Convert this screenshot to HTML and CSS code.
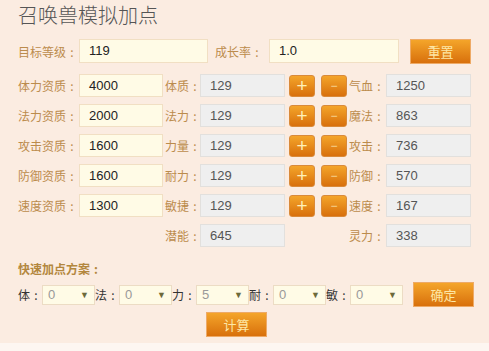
FILE: index.html
```html
<!DOCTYPE html>
<html lang="zh-CN">
  <head>
    <meta charset="UTF-8" />
    <meta name="viewport" content="width=device-width, initial-scale=1.0" />
    <title>召唤兽模拟加点</title>
    <link rel="stylesheet" href="styles.css">
  </head>
  <body>
    <div class="panel">
      <h1>召唤兽模拟加点</h1>

      <div class="row top-row">
        <span class="label lead">目标等级<span class="colon">:</span></span>
        <div class="box cream wide">119</div>
        <span class="label rate">成长率<span class="colon">:</span></span>
        <div class="box cream wide2">1.0</div>
        <button class="btn big reset">重置</button>
      </div>

      <div class="row stat">
        <span class="label lead">体力资质<span class="colon">:</span></span>
        <div class="box cream apt">4000</div>
        <span class="label mid">体质<span class="colon">:</span></span>
        <div class="box gray">129</div>
        <button class="btn small">+</button>
        <button class="btn small minus">−</button>
        <span class="label side">气血<span class="colon">:</span></span>
        <div class="box gray">1250</div>
      </div>

      <div class="row stat">
        <span class="label lead">法力资质<span class="colon">:</span></span>
        <div class="box cream apt">2000</div>
        <span class="label mid">法力<span class="colon">:</span></span>
        <div class="box gray">129</div>
        <button class="btn small">+</button>
        <button class="btn small minus">−</button>
        <span class="label side">魔法<span class="colon">:</span></span>
        <div class="box gray">863</div>
      </div>

      <div class="row stat">
        <span class="label lead">攻击资质<span class="colon">:</span></span>
        <div class="box cream apt">1600</div>
        <span class="label mid">力量<span class="colon">:</span></span>
        <div class="box gray">129</div>
        <button class="btn small">+</button>
        <button class="btn small minus">−</button>
        <span class="label side">攻击<span class="colon">:</span></span>
        <div class="box gray">736</div>
      </div>

      <div class="row stat">
        <span class="label lead">防御资质<span class="colon">:</span></span>
        <div class="box cream apt">1600</div>
        <span class="label mid">耐力<span class="colon">:</span></span>
        <div class="box gray">129</div>
        <button class="btn small">+</button>
        <button class="btn small minus">−</button>
        <span class="label side">防御<span class="colon">:</span></span>
        <div class="box gray">570</div>
      </div>

      <div class="row stat">
        <span class="label lead">速度资质<span class="colon">:</span></span>
        <div class="box cream apt">1300</div>
        <span class="label mid">敏捷<span class="colon">:</span></span>
        <div class="box gray">129</div>
        <button class="btn small">+</button>
        <button class="btn small minus">−</button>
        <span class="label side">速度<span class="colon">:</span></span>
        <div class="box gray">167</div>
      </div>

      <div class="row stat">
        <span class="label lead"></span>
        <div class="apt-gap"></div>
        <span class="label mid">潜能<span class="colon">:</span></span>
        <div class="box gray">645</div>
        <div class="btn-gap"></div>
        <span class="label side">灵力<span class="colon">:</span></span>
        <div class="box gray">338</div>
      </div>

      <div class="quick-title">快速加点方案<span class="colon">:</span></div>

      <div class="row quick">
        <span class="qlabel">体<span class="colon">:</span></span>
        <div class="select">0<span class="arrow">▼</span></div>
        <span class="qlabel">法<span class="colon">:</span></span>
        <div class="select">0<span class="arrow">▼</span></div>
        <span class="qlabel">力<span class="colon">:</span></span>
        <div class="select">5<span class="arrow">▼</span></div>
        <span class="qlabel">耐<span class="colon">:</span></span>
        <div class="select">0<span class="arrow">▼</span></div>
        <span class="qlabel">敏<span class="colon">:</span></span>
        <div class="select">0<span class="arrow">▼</span></div>
        <button class="btn big confirm">确定</button>
      </div>

      <div class="calc-row">
        <button class="btn big">计算</button>
      </div>
    </div>
  </body>
</html>
```

FILE: styles.css
```css
body {
  margin: 0;
  background-color: #fdf6f1;
  font-family: "Liberation Sans", "Noto Sans CJK SC", sans-serif;
  color: #333;
}

.panel {
  height: 343px;
  box-sizing: border-box;
  padding: 3px 0 0 18px;
  background-color: #fbece1;
}

h1 {
  margin: 0;
  height: 36px;
  font-family: "Noto Sans CJK SC", sans-serif;
  font-size: 20px;
  font-weight: 300;
  line-height: 24px;
  color: #555;
}

.row {
  display: flex;
  align-items: center;
}

.top-row {
  height: 24px;
  margin-bottom: 11px;
}

.stat {
  height: 23px;
  margin-bottom: 7px;
}

.label,
.qlabel,
.quick-title {
  font-family: "Noto Sans CJK SC", sans-serif;
}

.colon {
  display: inline-block;
  width: 12px;
  text-align: center;
}

.label {
  font-size: 12px;
  color: #bb8b4c;
  white-space: nowrap;
}

.lead {
  width: 61px;
}

.rate {
  width: 54px;
  padding-left: 7px;
}

.mid {
  width: 35px;
  padding-left: 2px;
}

.side {
  width: 37px;
  padding-left: 2px;
}

.box {
  box-sizing: border-box;
  height: 100%;
  padding-left: 9px;
  font-size: 13px;
  line-height: 21px;
  border: 1px solid;
}

.cream {
  background-color: #fffbe6;
  border-color: #f1dfc3;
  color: #222;
}

.gray {
  width: 85px;
  background-color: #efefef;
  border-color: #e2e0dd;
  color: #555;
}

.wide {
  width: 129px;
}

.wide2 {
  width: 130px;
  margin-right: 11px;
}

.apt {
  width: 84px;
}

.apt-gap {
  width: 84px;
}

.btn-gap {
  width: 62px;
}

.btn {
  box-sizing: border-box;
  border: 1px solid #eeaa66;
  background: linear-gradient(#f4a52a, #d8700c);
  color: #fde7a6;
  font-family: "Noto Sans CJK SC", sans-serif;
  padding: 0;
  cursor: pointer;
}

.big {
  width: 61px;
  height: 25px;
  font-size: 13px;
}

.small {
  width: 26px;
  height: 22px;
  margin-left: 4px;
  border-radius: 3px;
  border-color: #d98a3a;
  font-family: "Liberation Sans", sans-serif;
  font-size: 19px;
  line-height: 18px;
  color: #fff0b8;
}

.minus {
  margin-left: 6px;
  font-size: 12px;
  color: #f6d79a;
}

.quick-title {
  margin-top: 12px;
  height: 20px;
  font-size: 12px;
  font-weight: bold;
  line-height: 20px;
  color: #b3873e;
}

.quick {
  height: 25px;
  margin-top: 3px;
}

.qlabel {
  width: 24px;
  font-size: 12px;
  color: #333;
}

.select {
  box-sizing: border-box;
  width: 53px;
  height: 20px;
  padding: 0 5px;
  display: flex;
  justify-content: space-between;
  align-items: center;
  background-color: #fffbe6;
  border: 1px solid #ecdcc4;
  font-size: 13px;
  color: #999;
}

.arrow {
  font-size: 9px;
  color: #6d6a3a;
}

.confirm {
  margin-left: 10px;
}

.calc-row {
  margin-top: 5px;
  padding-left: 188px;
}
```
